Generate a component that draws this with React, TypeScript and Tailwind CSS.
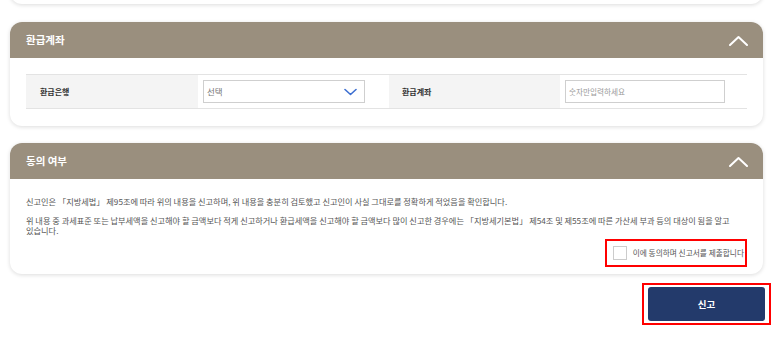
const font = { fontFamily: '"Noto Sans CJK KR", "Noto Sans", sans-serif' };

function SectionHeader({ title }: { title: string }) {
  return (
    <div className="flex h-[36px] items-center justify-between rounded-t-[12px] bg-[#9a8f7e] pl-[16px] pr-[15px]">
      <h2 className="text-[10.5px] font-bold text-white">{title}</h2>
      <svg width="19" height="11" viewBox="0 0 19 11" fill="none" className="mt-[1px]">
        <polyline points="1,10 9.5,2 18,10" stroke="white" strokeWidth="2" strokeLinecap="round" strokeLinejoin="round" />
      </svg>
    </div>
  );
}

export default function App() {
  return (
    <div className="min-h-screen bg-white pb-4" style={font}>
      {/* previous card, cut off at the top */}
      <div className="mx-[10px] -mt-[26px] h-[30px] rounded-b-[12px] bg-white shadow-[0_1px_4px_rgba(0,0,0,0.14)]" />

      {/* 환급계좌 */}
      <section className="mx-[10px] mt-[18px] rounded-[12px] bg-white shadow-[0_1px_4px_rgba(0,0,0,0.14)]">
        <SectionHeader title="환급계좌" />
        <div className="px-[16px] pt-[16px] pb-[17px]">
          <div className="grid h-[35px] grid-cols-[172px_191px_171px_1fr] border-y border-[#e3e3e3]">
            <div className="flex items-center bg-[#f4f4f4] pl-[14px] text-[8px] font-bold text-[#333]">환급은행</div>
            <div className="flex items-center px-[5px]">
              <div className="flex h-[23px] w-[162px] items-center justify-between border border-[#cfcfcf] bg-white pl-[3px] pr-[7px]">
                <span className="text-[8.5px] text-[#777]">선택</span>
                <svg width="13" height="8" viewBox="0 0 13 8" fill="none">
                  <polyline points="1,1.5 6.5,6.5 12,1.5" stroke="#3d6fd1" strokeWidth="1.6" strokeLinecap="round" strokeLinejoin="round" />
                </svg>
              </div>
            </div>
            <div className="flex items-center bg-[#f4f4f4] pl-[13px] text-[8px] font-bold text-[#333]">환급계좌</div>
            <div className="flex items-center px-[5px]">
              <input
                placeholder="숫자만입력하세요"
                className="h-[23px] w-[160px] border border-[#cfcfcf] px-[3px] text-[7.6px] text-[#555] placeholder:text-[#999] focus:outline-none"
              />
            </div>
          </div>
        </div>
      </section>

      {/* 동의 여부 */}
      <section className="mx-[10px] mt-[17px] rounded-[12px] bg-white shadow-[0_1px_4px_rgba(0,0,0,0.14)]">
        <SectionHeader title="동의 여부" />
        <div className="break-keep px-[16px] pt-[17px] pb-[7px] text-[8.2px] leading-[10px] text-[#555]">
          <p>
            신고인은 「지방세법」 제95조에 따라 위의 내용을 신고하며, 위 내용을 충분히 검토했고 신고인이 사실 그대로를 정확하게 적었음을 확인합니다.
          </p>
          <p className="mt-[9px]">
            위 내용 중 과세표준 또는 납부세액을 신고해야 할 금액보다 적게 신고하거나 환급세액을 신고해야 할 금액보다 많이 신고한 경우에는 「지방세기본법」 제54조 및 제55조에 따른 가산세 부과 등의 대상이 됨을 알고 있습니다.
          </p>
          <div className="mt-[4px] flex justify-end">
            <label className="flex h-[28px] items-center gap-[6px] border-2 border-[#ff0000] pl-[6px] pr-[1px]">
              <span className="h-[14px] w-[14px] border border-[#cccccc] bg-white" />
              <span className="text-[7.7px] text-[#555]">이에 동의하며 신고서를 제출합니다</span>
            </label>
          </div>
        </div>
      </section>

      <div className="mt-[9px] flex justify-end pr-[2px]">
        <div className="border-2 border-[#ff0000] px-[4px] py-[2px]">
          <button className="flex h-[34px] w-[117px] items-center justify-center rounded-[3px] bg-[#233a6b] text-[9.5px] font-bold text-white">
            신고
          </button>
        </div>
      </div>
    </div>
  );
}
